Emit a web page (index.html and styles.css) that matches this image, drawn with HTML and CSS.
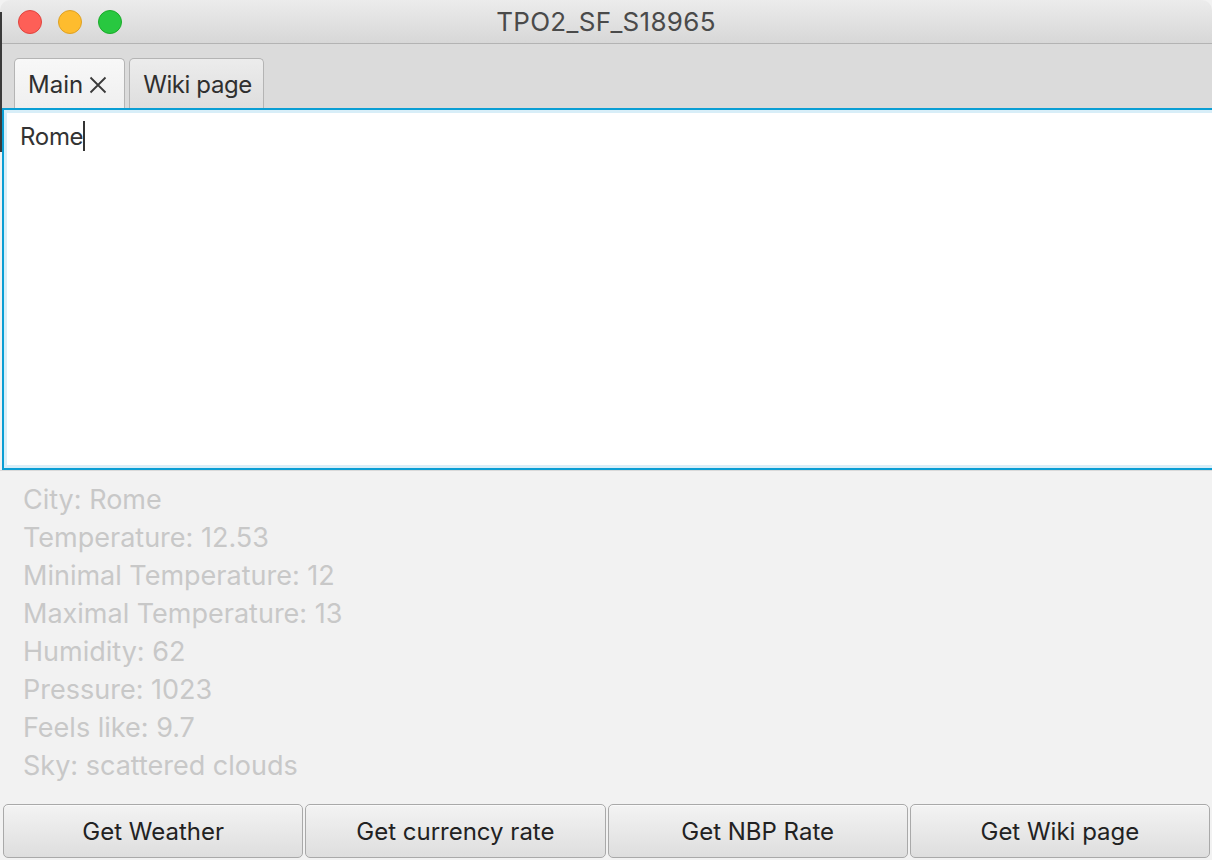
FILE: index.html
```html
<!DOCTYPE html>
<html>
<head>
<meta charset="utf-8">
<link rel="stylesheet" href="styles.css">
</head>
<body>
<div class="window">
  <div class="edge"></div>
  <header class="titlebar">
    <div class="lights">
      <span class="light red"></span>
      <span class="light yellow"></span>
      <span class="light green"></span>
    </div>
    <div class="title">TPO2_SF_S18965</div>
  </header>
  <nav class="tabbar">
    <div class="tab selected">Main <svg class="close" width="18" height="18" viewBox="0 0 18 18"><path d="M1.5 1.5 L16.5 16.5 M16.5 1.5 L1.5 16.5" stroke="#3a3a3a" stroke-width="1.8" fill="none"/></svg></div>
    <div class="tab">Wiki page</div>
  </nav>
  <div class="editor">
    <div class="editor-inner"><span class="text">Rome</span><span class="caret"></span></div>
  </div>
  <section class="labels">
    <div class="label">City: Rome</div>
    <div class="label">Temperature: 12.53</div>
    <div class="label">Minimal Temperature: 12</div>
    <div class="label">Maximal Temperature: 13</div>
    <div class="label">Humidity: 62</div>
    <div class="label">Pressure: 1023</div>
    <div class="label">Feels like: 9.7</div>
    <div class="label">Sky: scattered clouds</div>
  </section>
  <footer class="buttons">
    <div class="btn">Get Weather</div>
    <div class="btn">Get currency rate</div>
    <div class="btn">Get NBP Rate</div>
    <div class="btn">Get Wiki page</div>
  </footer>
</div>
</body>
</html>
```
FILE: styles.css
```css
html, body {
  margin: 0;
  padding: 0;
}
body {
  width: 1212px;
  height: 860px;
  overflow: hidden;
  background: #f2f2f2;
  font-family: Inter, "Liberation Sans", sans-serif;
}
.window {
  position: relative;
  width: 1212px;
  height: 860px;
  display: flex;
  flex-direction: column;
  background: #f2f2f2;
  overflow: hidden;
}
.edge {
  position: absolute;
  left: 0;
  top: 12px;
  width: 2px;
  height: 140px;
  background: #3a3a3a;
  z-index: 3;
}
.titlebar {
  height: 43px;
  flex: none;
  border-bottom: 1px solid #b3b3b3;
  background: linear-gradient(#ececec, #d7d7d7);
  border-radius: 10px 10px 0 0;
  display: flex;
  align-items: center;
  position: relative;
}
.lights {
  display: flex;
  gap: 16px;
  padding-left: 18px;
}
.light {
  width: 24px;
  height: 24px;
  border-radius: 50%;
  box-sizing: border-box;
}
.red { background: #fe5f57; border: 1px solid #e0443e; }
.yellow { background: #febc2e; border: 1px solid #dea123; }
.green { background: #28c840; border: 1px solid #1aab29; }
.title {
  position: absolute;
  left: 0;
  right: 0;
  top: 0;
  bottom: 0;
  display: flex;
  align-items: center;
  justify-content: center;
  font-size: 26px;
  color: #4a4a4a;
  letter-spacing: 0.3px;
}
.tabbar {
  height: 64px;
  flex: none;
  background: #dbdbdb;
  display: flex;
  align-items: flex-end;
  gap: 4px;
  padding-left: 14px;
}
.tab {
  height: 50px;
  box-sizing: border-box;
  border: 1px solid #b4b4b4;
  border-bottom: none;
  border-radius: 5px 5px 0 0;
  background: linear-gradient(#ececec, #dedede);
  display: flex;
  align-items: center;
  padding: 2px 11px 0 13px;
  font-size: 24px;
  color: #2f2f2f;
  letter-spacing: -0.4px;
}
.tab.selected {
  background: linear-gradient(#f8f8f8, #efefef);
  padding-right: 17px;
  letter-spacing: 0;
}
.close {
  margin-left: 6px;
}
.editor {
  height: 362px;
  flex: none;
  margin-left: 2px;
  width: 1216px;
  box-sizing: border-box;
  border: 2px solid #0a9ed4;
  background: #fff;
  box-shadow: inset 0 0 0 3px #d8eef8;
  padding: 6px 0 0 16px;
}
.editor-inner {
  display: flex;
  align-items: center;
  height: 40px;
  font-size: 24px;
  color: #333;
  letter-spacing: -0.3px;
}
.caret {
  width: 2px;
  height: 30px;
  background: #333;
  margin-left: 0;
}
.labels {
  flex: 1;
  padding: 10px 0 0 23px;
  border-top: 1px solid #d9d9d9;
}
.label {
  height: 38px;
  line-height: 38px;
  font-size: 27px;
  color: #c8c8c8;
}
.buttons {
  height: 58px;
  flex: none;
  box-sizing: border-box;
  display: flex;
  gap: 2px;
  padding: 2px 2px 2px 3px;
}
.btn {
  flex: 1;
  box-sizing: border-box;
  border: 1px solid #a9a9a9;
  border-radius: 5px;
  background: linear-gradient(#f3f3f3, #dedede);
  box-shadow: inset 0 1px 0 #fafafa;
  display: flex;
  align-items: center;
  justify-content: center;
  font-size: 24px;
  color: #222;
}
```
